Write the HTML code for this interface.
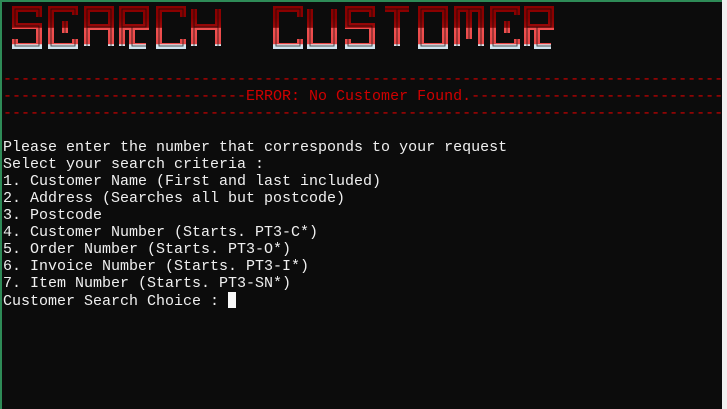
<!DOCTYPE html>
<html><head><meta charset="utf-8"><style>
html,body{margin:0;padding:0}
body{width:727px;height:409px;background:#f0f0f0;position:relative;overflow:hidden}
#term{position:absolute;left:0;top:0;width:722px;height:409px;background:#0c0c0c;border-top:2px solid #2e8b57;border-left:2px solid #2e8b57;box-sizing:border-box}
pre{position:absolute;left:3px;top:71px;margin:0;font-family:"Liberation Mono",monospace;font-size:15px;line-height:17px;color:#f0f0f0;letter-spacing:0}
.r{color:#d00000}
.cur{display:inline-block;width:8px;height:16px;background:#f8f8f8;vertical-align:-3px}
svg{position:absolute;left:0;top:0}
</style></head><body>
<div id="term"></div>
<svg width="722" height="60" viewBox="0 0 722 60">
<defs>
<linearGradient id="g" gradientUnits="userSpaceOnUse" x1="0" y1="9" x2="0" y2="46">
<stop offset="0" stop-color="#8a0000"/><stop offset="0.26" stop-color="#9a0a0a"/>
<stop offset="0.27" stop-color="#f05050"/><stop offset="0.7" stop-color="#e84848"/>
<stop offset="0.72" stop-color="#d8e8f0"/><stop offset="1" stop-color="#c0d8e8"/>
</linearGradient>
<g id="S"><path d="M24,8V0H0V17H24V37H0V30"/></g>
<g id="E"><path d="M24,6V0H0V37H24V30M14,12V24"/></g>
<g id="A"><path d="M0,37V0H24V37M0,18H24"/></g>
<g id="R"><path d="M0,37V0H24V18H0M10,18V37H24"/></g>
<g id="C"><path d="M24,8V0H0V37H24V30"/></g>
<g id="H"><path d="M0,0V37M24,0V37M0,18H24"/></g>
<g id="U"><path d="M0,0V37H24V0"/></g>
<g id="T"><path d="M0,0H24M12,0V37"/></g>
<g id="O"><path d="M0,0H24V37H0Z"/></g>
<g id="M"><path d="M0,37V0H24V37M12,0V30"/></g>
</defs>
<g fill="none" stroke="url(#g)" stroke-width="6" transform="translate(0,9)">
<use href="#S" x="15"/><use href="#E" x="51"/><use href="#A" x="87"/><use href="#R" x="122"/><use href="#C" x="159"/><use href="#H" x="194"/>
<use href="#C" x="276"/><use href="#U" x="310"/><use href="#S" x="348"/><use href="#T" x="385"/><use href="#O" x="421"/><use href="#M" x="457"/><use href="#E" x="493"/><use href="#R" x="527"/>
</g>
<g fill="none" stroke="#0c0c0c" stroke-width="1" opacity="0.7" transform="translate(0,9)">
<use href="#S" x="15"/><use href="#E" x="51"/><use href="#A" x="87"/><use href="#R" x="122"/><use href="#C" x="159"/><use href="#H" x="194"/>
<use href="#C" x="276"/><use href="#U" x="310"/><use href="#S" x="348"/><use href="#T" x="385"/><use href="#O" x="421"/><use href="#M" x="457"/><use href="#E" x="493"/><use href="#R" x="527"/>
</g>
</svg>
<pre><span class="r">--------------------------------------------------------------------------------
---------------------------ERROR: No Customer Found.----------------------------
--------------------------------------------------------------------------------</span>

Please enter the number that corresponds to your request
Select your search criteria :
1. Customer Name (First and last included)
2. Address (Searches all but postcode)
3. Postcode
4. Customer Number (Starts. PT3-C*)
5. Order Number (Starts. PT3-O*)
6. Invoice Number (Starts. PT3-I*)
7. Item Number (Starts. PT3-SN*)
Customer Search Choice : <span class="cur"></span></pre>
</body></html>
